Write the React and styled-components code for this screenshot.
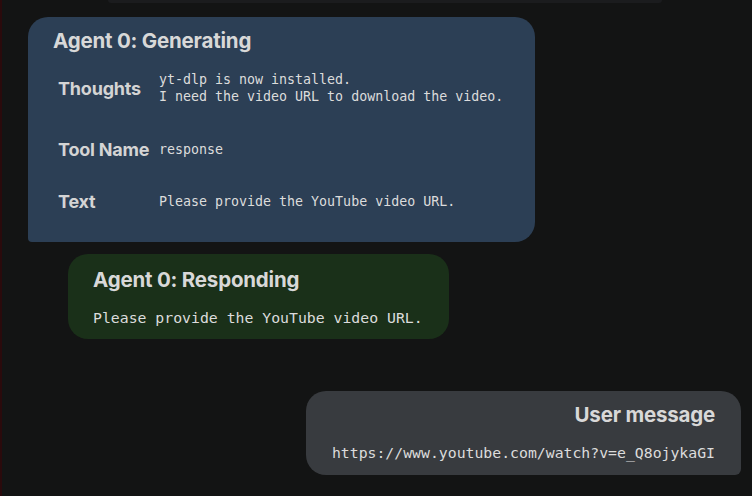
import styled, { createGlobalStyle } from "styled-components";

const GlobalStyle = createGlobalStyle`
  html, body {
    margin: 0;
    padding: 0;
    background: #131414;
  }
  body {
    font-family: Inter, "Noto Sans", sans-serif;
    color: #d4d4d4;
  }
`;

const Page = styled.div`
  width: 752px;
  height: 496px;
  box-sizing: border-box;
  border-left: 2px solid #2a0a0c;
  overflow: hidden;
  display: flex;
  flex-direction: column;
`;

// bottom edge of the previous message, cut off by the scroll
const PrevEdge = styled.div`
  height: 3px;
  margin: 0 90px 0 106px;
  background: #1b1c1e;
  border-radius: 0 0 12px 12px;
`;

const Messages = styled.div`
  display: flex;
  flex-direction: column;
  padding: 14px 11px 0 26px;
`;

const Bubble = styled.div`
  background: ${(p) => p.$bg};
  border-radius: ${(p) => p.$radius};
  padding: ${(p) => p.$pad || "12px 25px 15px"};
  box-sizing: border-box;
  align-self: ${(p) => (p.$user ? "flex-end" : "flex-start")};
  margin-left: ${(p) => p.$indent || 0}px;
  margin-top: ${(p) => p.$top || 0}px;
  width: ${(p) => (p.$width ? p.$width + "px" : "auto")};
  text-align: ${(p) => (p.$user ? "right" : "left")};
`;

const Title = styled.div`
  font-weight: 700;
  font-size: 20.5px;
  line-height: 24px;
  letter-spacing: -0.2px;
  color: #d8d8d8;
`;

const Rows = styled.div`
  display: grid;
  grid-template-columns: 106px 1fr;
`;

const Label = styled.div`
  font-weight: 700;
  font-size: 18px;
  letter-spacing: -0.2px;
  padding-left: 5px;
  display: flex;
  align-items: center;
  height: ${(p) => p.$h}px;
`;

const Value = styled.div`
  font-family: "DejaVu Sans Mono", "Liberation Mono", monospace;
  font-size: 13.3px;
  line-height: 17px;
  white-space: pre;
  display: flex;
  align-items: center;
  height: ${(p) => p.$h}px;
  color: #dcdcdc;
`;

const Mono = styled.div`
  font-family: "DejaVu Sans Mono", "Liberation Mono", monospace;
  font-size: 14.8px;
  line-height: 18px;
  margin-top: ${(p) => p.$top}px;
  color: #dcdcdc;
  white-space: pre;
`;

const rows = [
  { label: "Thoughts", value: "yt-dlp is now installed.\nI need the video URL to download the video.", h: 70 },
  { label: "Tool Name", value: "response", h: 52 },
  { label: "Text", value: "Please provide the YouTube video URL.", h: 52 },
];

export default function App() {
  return (
    <>
      <GlobalStyle />
      <Page>
        <PrevEdge />
        <Messages>
          <Bubble $bg="#2c3f55" $radius="20px 20px 20px 4px" $width={507} $pad="12px 25px 15px">
            <Title>Agent 0: Generating</Title>
            <Rows>
              {rows.map((r) => (
                <>
                  <Label key={r.label + "l"} $h={r.h}>{r.label}</Label>
                  <Value key={r.label + "v"} $h={r.h}>{r.value}</Value>
                </>
              ))}
            </Rows>
          </Bubble>
          <Bubble $bg="#1a3019" $radius="20px" $indent={40} $top={12} $pad="14px 26px 12px 25px">
            <Title>Agent 0: Responding</Title>
            <Mono $top={17}>Please provide the YouTube video URL.</Mono>
          </Bubble>
          <Bubble $bg="#383b3f" $radius="20px 20px 6px 20px" $user $top={52} $pad="12px 26px 13px 26px">
            <Title>User message</Title>
            <Mono $top={17}>https://www.youtube.com/watch?v=e_Q8ojykaGI</Mono>
          </Bubble>
        </Messages>
      </Page>
    </>
  );
}
